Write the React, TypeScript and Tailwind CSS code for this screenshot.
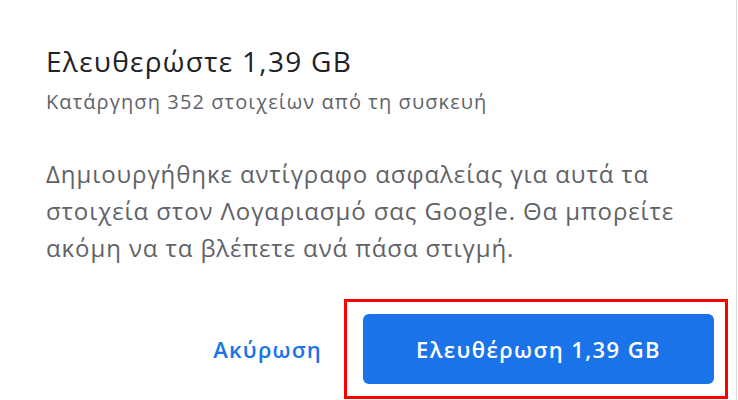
export default function App() {
  return (
    <div className="w-[738px] h-[400px] bg-white overflow-hidden font-['Open_Sans','Noto_Sans',sans-serif]">
      <div className="w-[737px] h-[400px] border-r border-[#dadce0] flex flex-col">
        <div className="pl-[46px] pt-[43px]">
          <h1 className="text-[28px] leading-[36px] tracking-[1.3px] text-[#202124] whitespace-nowrap">
            Ελευθερώστε 1,39 GB
          </h1>
          <p className="mt-[10px] text-[20px] leading-[26px] tracking-[1.1px] text-[#5f6368] whitespace-nowrap">
            Κατάργηση 352 στοιχείων από τη συσκευή
          </p>
          <p className="mt-[40px] text-[24px] leading-[37px] tracking-[0.9px] text-[#5f6368] whitespace-nowrap">
            Δημιουργήθηκε αντίγραφο ασφαλείας για αυτά τα
            <br />
            στοιχεία στον Λογαριασμό σας Google. Θα μπορείτε
            <br />
            ακόμη να τα βλέπετε ανά πάσα στιγμή.
          </p>
        </div>
        <div className="mt-[33px] flex items-center justify-end gap-[22px] pr-[8px]">
          <button className="text-[22px] font-semibold tracking-[1.2px] text-[#1a73e8] whitespace-nowrap">
            Ακύρωση
          </button>
          <div className="w-[384px] h-[100px] border-[3px] border-[#ff0000] pl-[16px] pr-[11px] pt-[12px]">
            <button className="w-full h-[70px] rounded-[6px] bg-[#1a73e8] text-white text-[22px] font-semibold tracking-[1.4px] whitespace-nowrap">
              Ελευθέρωση 1,39 GB
            </button>
          </div>
        </div>
      </div>
    </div>
  );
}
